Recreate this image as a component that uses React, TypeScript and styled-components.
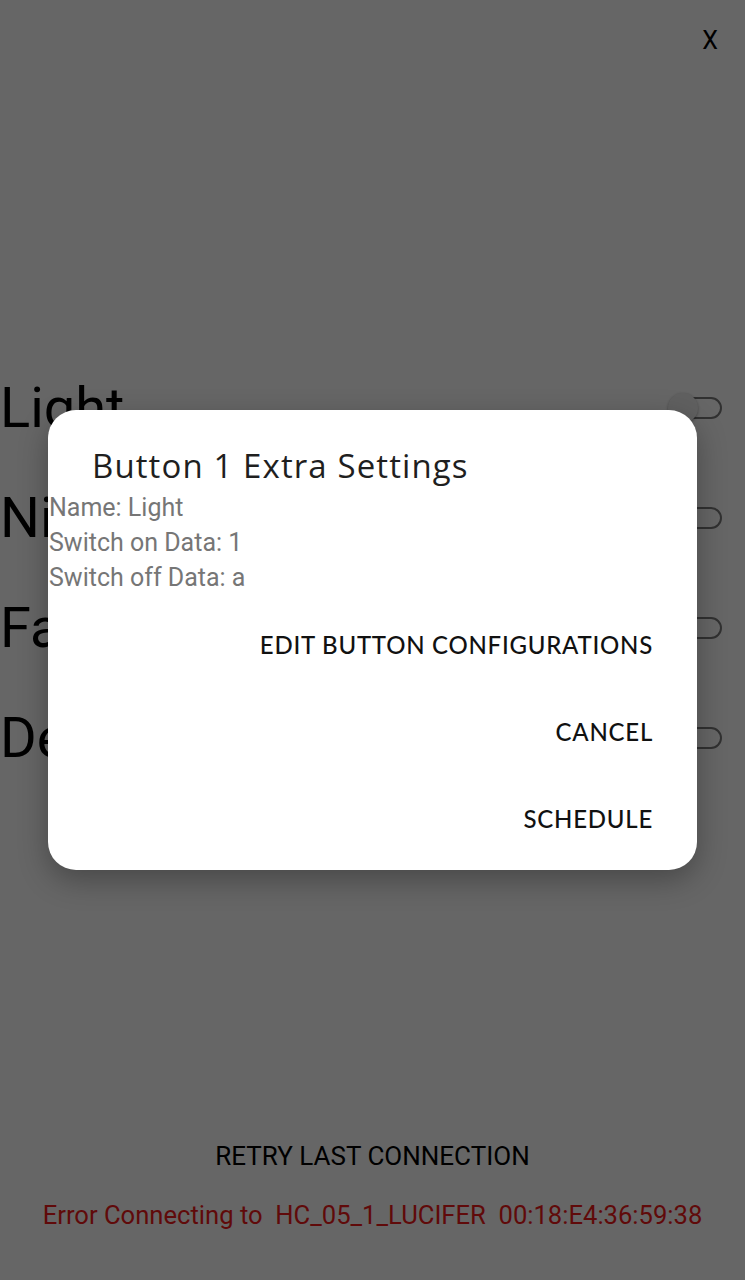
import React from "react";
import styled, { createGlobalStyle } from "styled-components";

const Global = createGlobalStyle`
  html, body { margin: 0; padding: 0; }
  body { background: #ffffff; font-family: Roboto, "Noto Sans", sans-serif; }
`;

const Page = styled.div`
  position: relative;
  width: 745px;
  height: 1280px;
  background: #ffffff;
  display: flex;
  flex-direction: column;
  overflow: hidden;
`;

const Header = styled.div`
  height: 80px;
  display: flex;
  justify-content: flex-end;
  align-items: center;
  padding-right: 27px;
`;

const Close = styled.span`
  font-family: Roboto, sans-serif;
  font-size: 25px;
  color: #000;
  line-height: 1;
`;

const List = styled.div`
  margin-top: 273px;
  display: flex;
  flex-direction: column;
`;

const Row = styled.div`
  height: 110px;
  display: flex;
  align-items: center;
  justify-content: space-between;
  padding-right: 23px;
`;

const Label = styled.span`
  font-family: Roboto, sans-serif;
  font-size: 56px;
  color: #000;
  line-height: 1;
`;

const Track = styled.div`
  position: relative;
  width: 42px;
  height: 22px;
  border: 2.5px solid #7a7a7a;
  border-radius: 14px;
  box-sizing: border-box;
`;

const Thumb = styled.div`
  position: absolute;
  left: -14px;
  top: -6px;
  width: 30px;
  height: 30px;
  border-radius: 50%;
  background: #f1f1f1;
  box-shadow: 0 1px 3px rgba(0, 0, 0, 0.35);
`;

const Bottom = styled.div`
  margin-top: auto;
  display: flex;
  flex-direction: column;
  align-items: center;
  padding-bottom: 50px;
  gap: 29px;
`;

const Retry = styled.span`
  font-family: Roboto, sans-serif;
  font-size: 26px;
  color: #000;
`;

const ErrorText = styled.span`
  font-family: Roboto, sans-serif;
  font-size: 25.6px;
  color: #f01a1a;
  white-space: pre;
`;

const Scrim = styled.div`
  position: absolute;
  inset: 0;
  background: rgba(0, 0, 0, 0.6);
  display: flex;
  align-items: center;
  justify-content: center;
`;

const Dialog = styled.div`
  width: 649px;
  height: 460px;
  background: #ffffff;
  border-radius: 28px;
  box-shadow: 0 10px 30px rgba(0, 0, 0, 0.3);
  box-sizing: border-box;
  padding-top: 36px;
  display: flex;
  flex-direction: column;
`;

const Title = styled.h2`
  margin: 0 0 4px 44px;
  font-family: "Open Sans", sans-serif;
  font-weight: 500;
  font-size: 33px;
  line-height: 40px;
  color: #1f1f1f;
  letter-spacing: 1.1px;
`;

const Info = styled.div`
  margin-left: 1px;
  font-family: Roboto, sans-serif;
  font-size: 25px;
  line-height: 35px;
  color: #767676;
`;

const Actions = styled.div`
  margin-top: 6px;
  display: flex;
  flex-direction: column;
  align-items: flex-end;
  padding-right: 44px;
`;

const Action = styled.button`
  height: 87px;
  padding: 0;
  border: none;
  background: none;
  font-family: Lato, sans-serif;
  font-weight: 500;
  font-size: 24px;
  color: #111;
  letter-spacing: 0.75px;
`;

const rows = ["Light", "Night", "Fan", "Desk"];

export default function App() {
  return (
    <>
      <Global />
      <Page>
        <Header>
          <Close>X</Close>
        </Header>
        <List>
          {rows.map((r, i) => (
            <Row key={r}>
              <Label>{r}</Label>
              <Track>{i === 0 && <Thumb />}</Track>
            </Row>
          ))}
        </List>
        <Bottom>
          <Retry>RETRY LAST CONNECTION</Retry>
          <ErrorText>{"Error Connecting to  HC_05_1_LUCIFER  00:18:E4:36:59:38"}</ErrorText>
        </Bottom>
        <Scrim>
          <Dialog>
            <Title>Button 1 Extra Settings</Title>
            <Info>Name: Light</Info>
            <Info>Switch on Data: 1</Info>
            <Info>Switch off Data: a</Info>
            <Actions>
              <Action>EDIT BUTTON CONFIGURATIONS</Action>
              <Action>CANCEL</Action>
              <Action>SCHEDULE</Action>
            </Actions>
          </Dialog>
        </Scrim>
      </Page>
    </>
  );
}
